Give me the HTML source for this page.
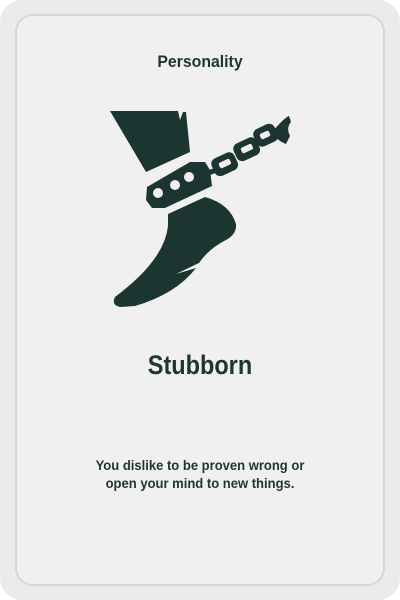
<!DOCTYPE html>
<html><head><style>
html,body{margin:0;padding:0;width:400px;height:600px;background:#fff;overflow:hidden}
.card{position:absolute;left:0;top:0;width:400px;height:600px;border-radius:22px;background:#ebebeb}
.inner{position:absolute;left:15px;top:14px;width:366px;height:568px;border:2px solid #d6d6d6;border-radius:18px;background:#f0f0f0}
.t{position:absolute;left:0;width:400px;text-align:center;color:#1e3530;font-family:"Liberation Sans",sans-serif;font-weight:bold}
</style></head><body>
<div class="card"></div><div class="inner"></div>
<div class="t" style="top:52px;font-size:17px;transform:scaleX(0.93)">Personality</div>
<svg style="position:absolute;left:0;top:0" width="400" height="600" viewBox="0 0 400 600">
<g fill="#1d3530">
<path d="M110 111 L178 111 L180 120 L183 112 L186 112 L190 152 L146 172 Z"/>
<path d="M147 187 L190 162 L205 162 L210 170 L212 186 L165 208 L152 208 L146 200 Z"/>
<path d="M168 214 L205 197 Q230 204 236 224 Q237 234 226 240 Q206 250 196 268 Q176 294 135 306 L120 307 Q111 305 115 297 Q140 278 152 262 Q166 244 168 226 Z"/>
<rect x="208" y="168" width="14" height="5" transform="rotate(-20 215 170)"/>
<rect x="212" y="155" width="25" height="19" rx="6" transform="rotate(-25 224 164)"/>
<rect x="234" y="140" width="25" height="19" rx="6" transform="rotate(-25 246 149)"/>
<rect x="254" y="126" width="23" height="19" rx="6" transform="rotate(-25 265 135)"/>
<path d="M272 132 Q284 118 289 116 L291 122 Q286 128 290 136 L286 144 Q276 140 272 132 Z"/>
</g>
<g fill="#f0f0f0">
<circle cx="158" cy="193" r="5"/><circle cx="175" cy="185" r="5"/><circle cx="189" cy="177" r="5"/>
<rect x="219" y="161" width="12" height="6" rx="2" transform="rotate(-25 224 164)"/>
<rect x="241" y="146" width="12" height="6" rx="2" transform="rotate(-25 246 149)"/>
<rect x="260" y="132" width="10" height="6" rx="2" transform="rotate(-25 265 135)"/>
<path d="M176 274 L201 262 L196 268 Z"/>
</g>
</svg>
<div class="t" style="top:350px;font-size:27px;transform:scaleX(0.87)">Stubborn</div>
<div class="t" style="top:456px;font-size:14px;line-height:18px;transform:scaleX(0.93)">You dislike to be proven wrong or<br>open your mind to new things.</div>
</body></html>
